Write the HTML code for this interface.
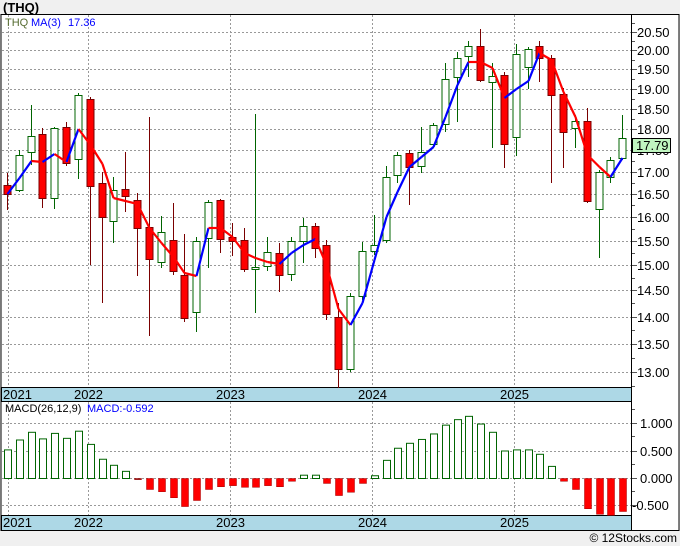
<!DOCTYPE html>
<html><head><meta charset="utf-8"><style>
html,body{margin:0;padding:0;background:#f0f0f0;width:680px;height:546px;overflow:hidden}
svg{display:block;font-family:"Liberation Sans",sans-serif}
</style></head><body>
<svg id="s" width="680" height="546" xmlns="http://www.w3.org/2000/svg">
<rect x="0" y="0" width="680" height="546" fill="#f0f0f0"/>
<text x="3" y="12" font-size="13" font-weight="bold" fill="#000">(THQ)</text>
<rect x="1" y="14.5" width="678" height="516" fill="#fff" stroke="#000" stroke-width="1"/>
<g id="g"></g>
<text x="677" y="542" font-size="12" text-anchor="end" fill="#000">© 12Stocks.com</text>
</svg>
<script>
var g=document.getElementById('g'),h='';
function L(x1,y1,x2,y2,c,w,d){h+='<line x1="'+x1+'" y1="'+y1+'" x2="'+x2+'" y2="'+y2+'" stroke="'+c+'" stroke-width="'+(w||1)+'"'+(d?' stroke-dasharray="'+d+'"':'')+'/>';}
function T(x,y,t,c,s,a){h+='<text x="'+x+'" y="'+y+'" font-size="'+(s||12)+'" fill="'+(c||'#000')+'"'+(a?' text-anchor="'+a+'"':'')+'>'+t+'</text>';}
function P(p){return 32+(Math.log(20.5)-Math.log(p))*746.4;}
// grids
for(var p=13;p<=20.51;p+=0.5){var y=Math.round(P(p))+0.5;L(2,y,631,y,'#999',1,'2,2');L(631,y,637,y,'#555');T(637,y+4.5,p.toFixed(2),'#000',13);}
for(var p=12.75;p<=20.8;p+=0.5){var y=Math.round(P(p))+0.5;L(631,y,635,y,'#555');}
var vx=[8,88,230,372,514];
vx.forEach(function(x){L(x+0.5,15,x+0.5,387,'#999',1,'2,2');L(x+0.5,402,x+0.5,515,'#999',1,'2,2');});
// macd grid
[[423,'1.000'],[450.5,'0.500'],[478,'0.000'],[505,'-0.500']].forEach(function(a){var y=Math.round(a[0])+0.5;L(2,y,631,y,'#999',1,'2,2');L(631,y,637,y,'#555');T(a[1][0]=='-'?632:640,y+4.5,a[1],'#000',13);});
[409,436,464,491].forEach(function(y){L(631,y+0.5,635,y+0.5,'#555');});
// bands
h+='<rect x="1.5" y="387.5" width="630" height="14" fill="#add8e6" stroke="#000"/>';
h+='<rect x="1.5" y="515.5" width="630" height="15" fill="#add8e6" stroke="#000"/>';
var yl=[[3,'2021'],[74,'2022'],[216,'2023'],[358,'2024'],[500,'2025']];
yl.forEach(function(a){T(a[0],399,a[1],'#000',13);T(a[0],527,a[1],'#000',13);});
L(631.5,15,631.5,531,'#000');
// candles [o,c,h,l] in px (o=top for red? store top,bottom,hi,lo,up)
var C=[[185,194,173,210,0],[155,190,150,192,1],[136,152,105,165,1],[134,198,128,208,0],[128,198,127,209,1],[127,163,122,166,0],[95,159,93,179,1],[99,186,97,265,0],[183,217,172,303,0],[190,221,177,243,1],[189,196,152,212,0],[200,228,193,276,0],[227,259,117,336,0],[232,262,216,268,1],[240,271,203,275,0],[275,318,234,322,0],[241,312,237,332,1],[202,238,200,268,1],[200,239,199,253,0],[237,241,223,256,0],[240,269,228,272,0],[267,269,114,313,1],[252,266,237,271,1],[253,275,243,292,0],[241,274,237,281,1],[226,241,218,263,1],[226,248,223,258,0],[245,314,240,320,0],[317,369,303,388,0],[296,369,293,372,1],[251,296,242,300,1],[245,251,215,255,1],[177,240,166,243,1],[155,175,152,183,1],[153,167,150,205,0],[152,166,127,173,1],[125,144,123,148,1],[79,124,63,132,1],[58,77,52,122,1],[46,56,41,77,1],[46,80,29,82,0],[76,82,63,148,1],[75,144,72,168,0],[54,137,44,156,1],[49,67,47,89,1],[46,58,41,82,0],[58,95,55,183,0],[94,132,88,168,0],[121,128,115,148,1],[121,201,108,203,0],[172,209,170,258,1],[160,177,157,183,1],[138,158,115,160,1]];
function X(i){return Math.round(7+i*11.83);}
C.forEach(function(c,i){var x=X(i)+0.5;var col=c[4]?'#006400':'#7a0000';L(x,c[2],x,c[3],col);
 if(c[4])h+='<rect x="'+(x-3.5)+'" y="'+(c[0]+0.5)+'" width="7" height="'+Math.max(c[1]-c[0],1)+'" fill="#fff" stroke="#006400"/>';
 else h+='<rect x="'+(x-3.5)+'" y="'+(c[0]+0.5)+'" width="7" height="'+Math.max(c[1]-c[0],1)+'" fill="#ff0000" stroke="#7a0000"/>';});
var M=[194,178,161,162,154,162,129,145,164,198,201,204,228,243,257,273,276,228,228,237,253,258,262,264,253,245,239,265,309,325,303,260,217,192,167,157,147,117,85,62,62,68,98,89,81,53,60,92,117,155,167,177,158];
for(var i=1;i<M.length;i++){L(X(i-1)+0.5,M[i-1],X(i)+0.5,M[i],M[i]<M[i-1]?'#0000ff':'#ff0000',2.2);}
// price label
h+='<rect x="632.5" y="138.5" width="38" height="14" fill="#c0f5c0" stroke="#000"/>';T(636,150,'17.79','#000',13);
// legend
T(5,26,'THQ','#556b2f',11);T(31,26,'MA(3)','#0000ff',11);T(68,26,'17.36','#0000ff',11);
T(5,412,'MACD(26,12,9)','#000',11);T(87,412,'MACD:-0.592','#0000ff',11);
// macd
var V=[0.52,0.70,0.84,0.72,0.82,0.73,0.86,0.62,0.35,0.24,0.13,-0.02,-0.20,-0.24,-0.35,-0.51,-0.40,-0.20,-0.15,-0.13,-0.16,-0.16,-0.13,-0.15,-0.05,0.06,0.06,-0.09,-0.31,-0.25,-0.09,0.05,0.33,0.55,0.64,0.71,0.81,0.97,1.07,1.13,0.99,0.84,0.50,0.52,0.52,0.44,0.22,-0.05,-0.20,-0.55,-0.65,-0.67,-0.60];
V.forEach(function(v,i){var x=X(i)-3+0.5,y0=478.5,hh=Math.abs(v)*55;
 if(v>=0)h+='<rect x="'+x+'" y="'+(y0-hh)+'" width="7" height="'+hh+'" fill="#fff" stroke="#006400"/>';
 else h+='<rect x="'+x+'" y="'+y0+'" width="7" height="'+Math.min(hh,37)+'" fill="'+(i==11?'#7a0000':'#ff0000')+'" stroke="#a00000" stroke-width="0.5"/>';});
g.innerHTML=h;
</script>
</body></html>
